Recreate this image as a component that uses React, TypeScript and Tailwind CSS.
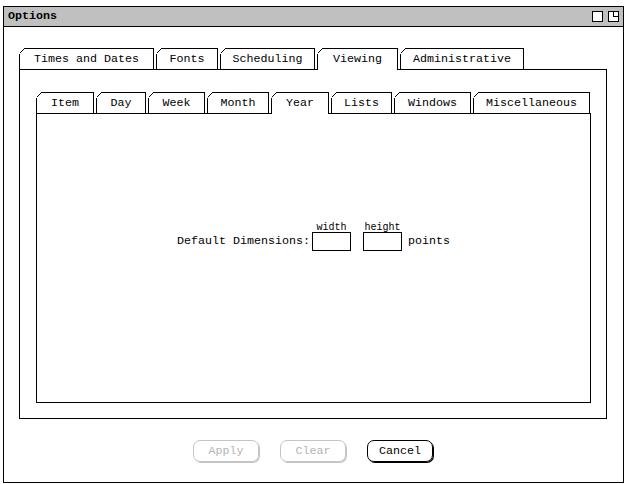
import React from 'react'

type TabDef = { label: string; w: string; active?: boolean }

const outerTabs: TabDef[] = [
  { label: 'Times and Dates', w: 'w-[135px]' },
  { label: 'Fonts', w: 'w-[62px]' },
  { label: 'Scheduling', w: 'w-[95px]' },
  { label: 'Viewing', w: 'w-[81px]', active: true },
  { label: 'Administrative', w: 'w-[124px]' },
]

const innerTabs: TabDef[] = [
  { label: 'Item', w: 'w-[58px]' },
  { label: 'Day', w: 'w-[50px]' },
  { label: 'Week', w: 'w-[57px]' },
  { label: 'Month', w: 'w-[62px]' },
  { label: 'Year', w: 'w-[58px]', active: true },
  { label: 'Lists', w: 'w-[61px]' },
  { label: 'Windows', w: 'w-[77px]' },
  { label: 'Miscellaneous', w: 'w-[117px]' },
]

const Tab: React.FC<TabDef> = ({ label, w, active }) => (
  <div
    className={`relative flex items-center justify-center border-l border-t border-r border-black bg-white ${w} ${
      active ? 'z-10 -mb-px h-[22px]' : 'h-[21px] pt-px'
    }`}
  >
    <svg className="absolute -left-px -top-px" width="6" height="6" shapeRendering="crispEdges">
      <polygon points="0,0 6,0 0,6" fill="#fff" />
      <line x1="0.5" y1="5.5" x2="5.5" y2="0.5" stroke="#000" />
    </svg>
    {label}
  </div>
)

const TabStrip: React.FC<{ tabs: TabDef[] }> = ({ tabs }) => (
  <div className="flex items-end gap-[2px]">
    {tabs.map((t) => (
      <Tab key={t.label} {...t} />
    ))}
  </div>
)

const Button: React.FC<{ label: string; disabled?: boolean }> = ({ label, disabled }) => (
  <div
    className={`flex h-[22px] w-[66px] items-center justify-center rounded-[7px] border pt-px ${
      disabled
        ? 'border-[#c4c4c4] text-[#b4b4b4] shadow-[1px_1px_0_#c4c4c4]'
        : 'border-black text-black shadow-[1px_1px_0_#000]'
    }`}
  >
    {label}
  </div>
)

const TitleIcons: React.FC = () => (
  <div className="flex items-center gap-[5px]">
    <svg width="11" height="11" shapeRendering="crispEdges">
      <rect x="0.5" y="0.5" width="10" height="10" fill="#fff" stroke="#000" />
    </svg>
    <svg width="11" height="11" shapeRendering="crispEdges">
      <rect x="0.5" y="0.5" width="10" height="10" fill="#fff" stroke="#000" />
      <path d="M5.5 1V5.5H10" fill="none" stroke="#000" />
    </svg>
  </div>
)

export default function App() {
  return (
    <div className="h-[484px] w-[626px] bg-white pl-[3px] pt-[6px] font-['Liberation_Mono','Courier_New',monospace] text-[11.67px] text-black">
      <div className="flex h-[477px] w-[621px] flex-col border border-black">
        <div className="flex h-[20px] items-center justify-between border-b border-black bg-[#c0c0c0] pl-[4px] pr-[4px]">
          <span className="font-bold">Options</span>
          <TitleIcons />
        </div>

        <div className="flex flex-1 flex-col pl-[15px] pr-[16px] pt-[21px]">
          <TabStrip tabs={outerTabs} />
          <div className="h-[350px] border border-black pb-[15px] pl-[16px] pr-[15px] pt-[22px]">
            <TabStrip tabs={innerTabs} />
            <div className="flex h-[290px] items-start justify-center border border-black pt-[109px]">
              <div className="flex items-end">
                <span className="h-[19px] leading-[19px]">Default Dimensions:</span>
                <div className="ml-[2px] flex flex-col items-center">
                  <span className="-mb-px text-[10px] leading-[10px]">width</span>
                  <div className="h-[19px] w-[39px] border border-black" />
                </div>
                <div className="ml-[12px] flex flex-col items-center">
                  <span className="-mb-px text-[10px] leading-[10px]">height</span>
                  <div className="h-[19px] w-[39px] border border-black" />
                </div>
                <span className="ml-[6px] h-[19px] leading-[19px]">points</span>
              </div>
            </div>
          </div>

          <div className="mt-[21px] flex justify-center gap-[21px]">
            <Button label="Apply" disabled />
            <Button label="Clear" disabled />
            <Button label="Cancel" />
          </div>
        </div>
      </div>
    </div>
  )
}
